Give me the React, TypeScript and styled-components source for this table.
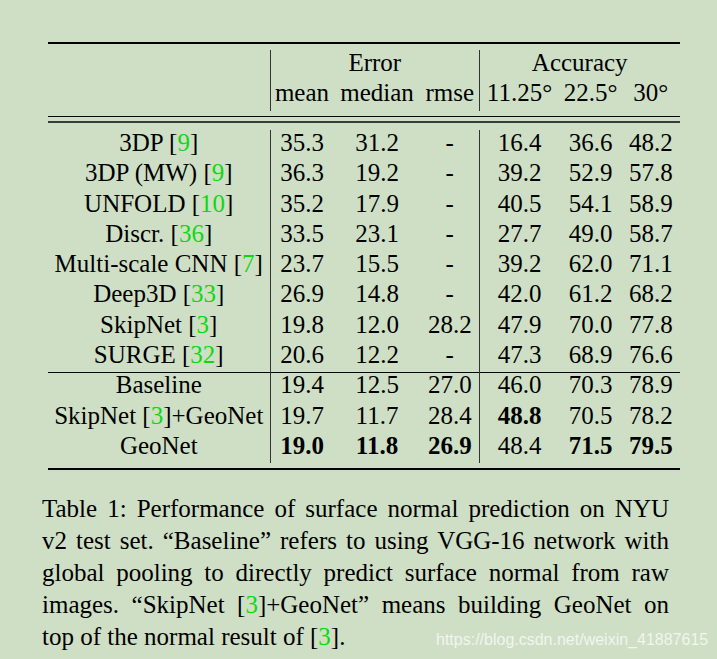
import React from "react";
import styled, { createGlobalStyle } from "styled-components";

const GlobalStyle = createGlobalStyle`
  html, body {
    margin: 0;
    padding: 0;
    background: #cedfc6;
  }
`;

const Page = styled.div`
  position: relative;
  box-sizing: border-box;
  width: 717px;
  min-height: 659px;
  padding: 42px 0 0 42px;
  font-family: "Liberation Serif", "Times New Roman", serif;
  color: #000;
`;

const Table = styled.table`
  margin-left: 6px;
  width: 631.5px;
  table-layout: fixed;
  border-collapse: separate;
  border-spacing: 0;
  font-size: 25px;
`;

const RuleCell = styled.td<{ $h: number; $color?: string }>`
  padding: 0;
  height: ${(p) => p.$h}px;
  font-size: 0;
  line-height: 0;
  background: ${(p) => p.$color ?? "transparent"};
`;

const Cell = styled.td<{ $sep?: boolean; $bold?: boolean; $rule?: boolean; $head?: boolean }>`
  padding: 0 0 ${(p) => (p.$head ? 4.5 : 4.3)}px 0;
  line-height: 26px;
  text-align: center;
  white-space: nowrap;
  font-weight: ${(p) => (p.$bold ? 700 : 400)};
  border-left: ${(p) => (p.$sep ? "1px solid #333" : "0")};
  box-shadow: ${(p) => (p.$rule ? "inset 0 1px 0 #000" : "none")};
`;

const Cite = styled.span`
  color: #10d810;
`;

const Caption = styled.div`
  width: 627px;
  margin-top: 23.8px;
  font-size: 25px;
  line-height: 32px;
`;

const CaptionLine = styled.div<{ $last?: boolean }>`
  text-align: ${(p) => (p.$last ? "left" : "justify")};
  text-align-last: ${(p) => (p.$last ? "left" : "justify")};
  white-space: nowrap;
`;

const Watermark = styled.div`
  position: absolute;
  left: 436px;
  top: 631px;
  font-family: "Liberation Sans", Arial, sans-serif;
  font-size: 16px;
  line-height: 18px;
  color: rgba(255, 255, 255, 0.72);
  white-space: nowrap;
`;

const widths = [221.5, 64, 87, 58.5, 80, 63, 57.5];

type Row = {
  name: React.ReactNode;
  vals: string[];
  bold?: number[];
  rule?: boolean;
};

const rows: Row[] = [
  { name: <>3DP [<Cite>9</Cite>]</>, vals: ["35.3", "31.2", "-", "16.4", "36.6", "48.2"] },
  { name: <>3DP (MW) [<Cite>9</Cite>]</>, vals: ["36.3", "19.2", "-", "39.2", "52.9", "57.8"] },
  { name: <>UNFOLD [<Cite>10</Cite>]</>, vals: ["35.2", "17.9", "-", "40.5", "54.1", "58.9"] },
  { name: <>Discr. [<Cite>36</Cite>]</>, vals: ["33.5", "23.1", "-", "27.7", "49.0", "58.7"] },
  { name: <>Multi-scale CNN [<Cite>7</Cite>]</>, vals: ["23.7", "15.5", "-", "39.2", "62.0", "71.1"] },
  { name: <>Deep3D [<Cite>33</Cite>]</>, vals: ["26.9", "14.8", "-", "42.0", "61.2", "68.2"] },
  { name: <>SkipNet [<Cite>3</Cite>]</>, vals: ["19.8", "12.0", "28.2", "47.9", "70.0", "77.8"] },
  { name: <>SURGE [<Cite>32</Cite>]</>, vals: ["20.6", "12.2", "-", "47.3", "68.9", "76.6"] },
  { name: <>Baseline</>, vals: ["19.4", "12.5", "27.0", "46.0", "70.3", "78.9"], rule: true },
  { name: <>SkipNet [<Cite>3</Cite>]+GeoNet</>, vals: ["19.7", "11.7", "28.4", "48.8", "70.5", "78.2"], bold: [3] },
  { name: <>GeoNet</>, vals: ["19.0", "11.8", "26.9", "48.4", "71.5", "79.5"], bold: [0, 1, 2, 4, 5] },
];

const Spacer = ({ h, color }: { h: number; color?: string }) => (
  <tr>
    <RuleCell colSpan={7} $h={h} $color={color} />
  </tr>
);

export default function App() {
  return (
    <>
      <GlobalStyle />
      <Page>
        <Table>
          <colgroup>
            {widths.map((w, i) => (
              <col key={i} style={{ width: `${w}px` }} />
            ))}
          </colgroup>
          <tbody>
            <Spacer h={2} color="#000" />
            <Spacer h={5.5} />
            <tr>
              <Cell $head />
              <Cell $head $sep colSpan={3}>Error</Cell>
              <Cell $head $sep colSpan={3}>Accuracy</Cell>
            </tr>
            <tr>
              <Cell $head />
              <Cell $head $sep>mean</Cell>
              <Cell $head>median</Cell>
              <Cell $head>rmse</Cell>
              <Cell $head $sep>11.25°</Cell>
              <Cell $head>22.5°</Cell>
              <Cell $head>30°</Cell>
            </tr>
            <Spacer h={5} />
            <Spacer h={1.5} color="#000" />
            <Spacer h={4} />
            <Spacer h={2} color="#3a3a3a" />
            <Spacer h={7} />
            {rows.map((r, ri) => (
              <tr key={ri}>
                <Cell $rule={r.rule}>{r.name}</Cell>
                {r.vals.map((v, vi) => (
                  <Cell
                    key={vi}
                    $rule={r.rule}
                    $sep={vi === 0 || vi === 3}
                    $bold={r.bold?.includes(vi)}
                  >
                    {v}
                  </Cell>
                ))}
              </tr>
            ))}
            <Spacer h={4.4} />
            <Spacer h={2} color="#000" />
          </tbody>
        </Table>
        <Caption>
          <CaptionLine>Table 1: Performance of surface normal prediction on NYU</CaptionLine>
          <CaptionLine>v2 test set. “Baseline” refers to using VGG-16 network with</CaptionLine>
          <CaptionLine>global pooling to directly predict surface normal from raw</CaptionLine>
          <CaptionLine>
            images. “SkipNet [<Cite>3</Cite>]+GeoNet” means building GeoNet on
          </CaptionLine>
          <CaptionLine $last>
            top of the normal result of [<Cite>3</Cite>].
          </CaptionLine>
        </Caption>
        <Watermark>https://blog.csdn.net/weixin_41887615</Watermark>
      </Page>
    </>
  );
}
